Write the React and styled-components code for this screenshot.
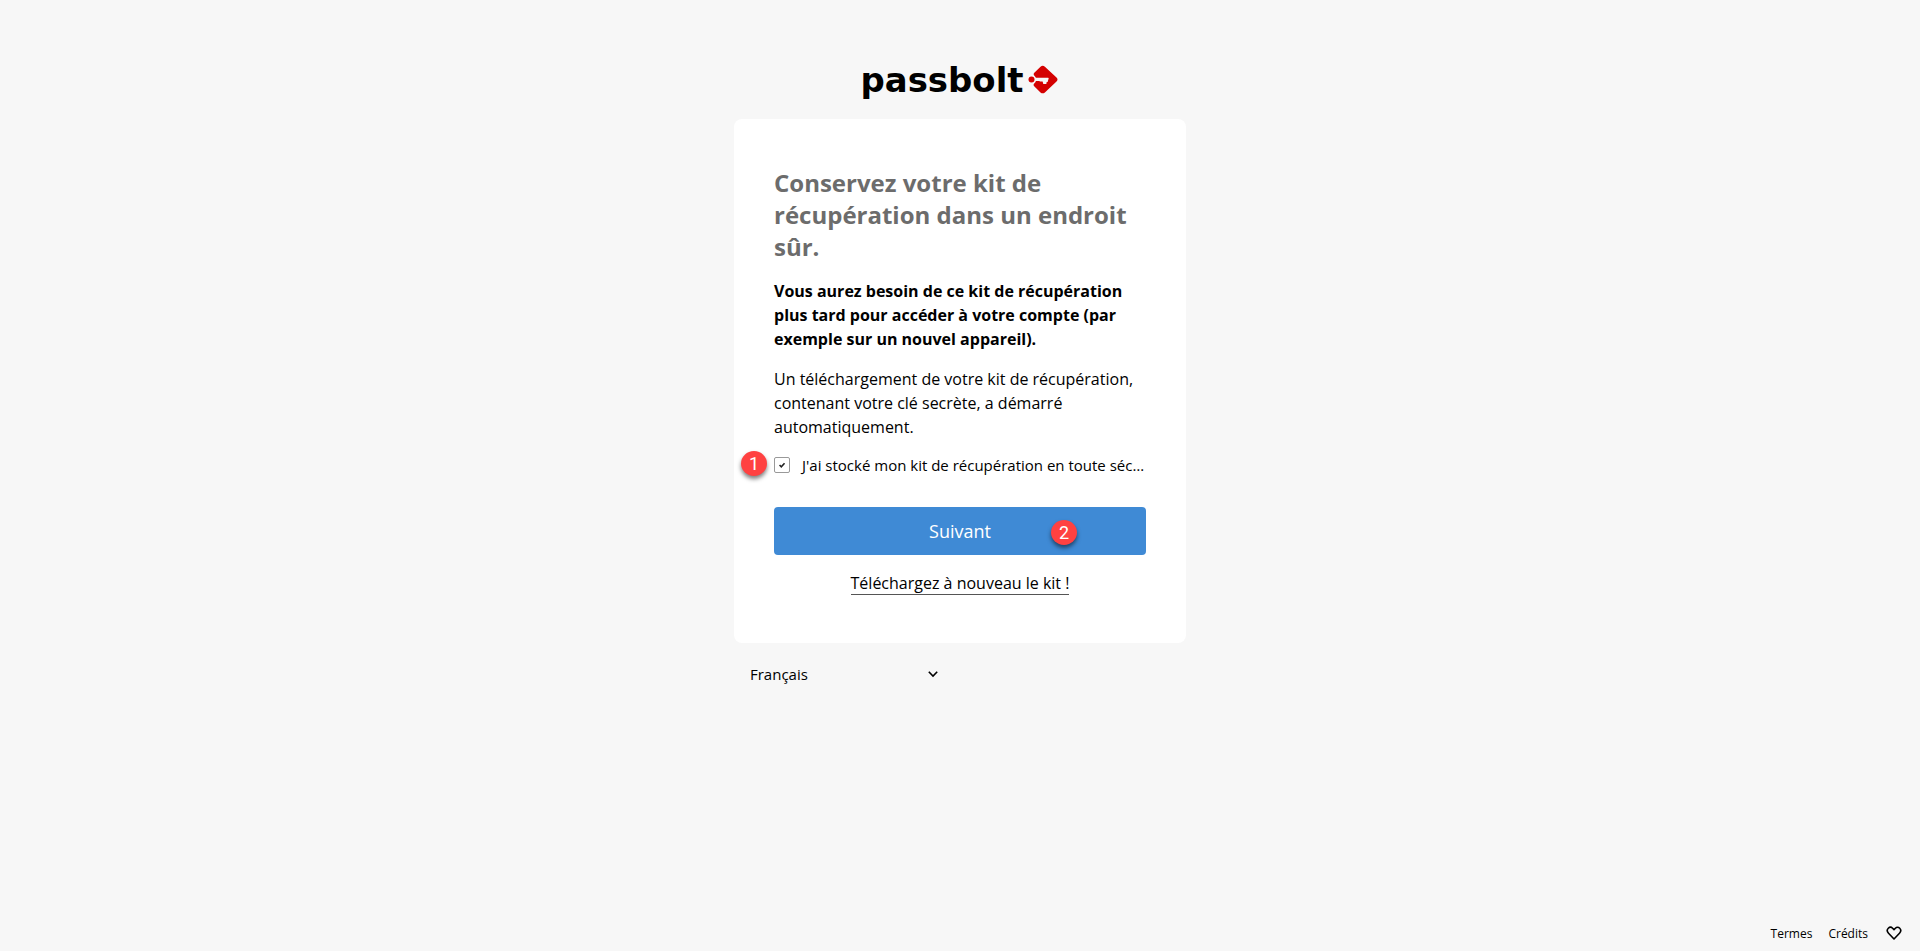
import React, { useState } from 'react';
import styled, { createGlobalStyle } from 'styled-components';

function App() {
  const [stored, setStored] = useState(true);

  return (
    <>
      <GlobalStyle />
      <Page>
        <Main>
          <Logo viewBox="0 0 200 40" role="img" aria-label="passbolt">
            <Wordmark x="0.5" y="31.6" textLength="163" lengthAdjust="spacingAndGlyphs">
              passbolt
            </Wordmark>
            <path
              d="M180.5 6.7q2.2-1.8 4.4 0l11.6 10.8q2 2 0 4l-11.6 10.9q-2.2 1.8-4.4 0l-6.3-6.1q-1.4-1.4-.2-2.6 2.2-1.8 2.2-4.2t-2.2-4.2q-1-1.2.3-2.5z"
              fill="#d40101"
            />
            <path d="M174 17.8h14q1 0 .6 1l-1 3.2h-.9l-.4 2h-3l-.7-2.4H180l-.7-.6H174z" fill="#f7f7f7" />
            <circle cx="171.5" cy="19.6" r="3" fill="#d40101" />
          </Logo>

          <Card>
            <Title>Conservez votre kit de récupération dans un endroit sûr.</Title>
            <Paragraph $strong>
              Vous aurez besoin de ce kit de récupération plus tard pour accéder à votre compte (par
              exemple sur un nouvel appareil).
            </Paragraph>
            <Paragraph>
              Un téléchargement de votre kit de récupération, contenant votre clé secrète, a démarré
              automatiquement.
            </Paragraph>

            <CheckboxRow>
              <Checkbox
                type="checkbox"
                checked={stored}
                onChange={(e) => setStored(e.target.checked)}
              />
              <CheckMark viewBox="0 0 16 16">
                {stored && <path d="M5.2 8l2 2 3.7-4" />}
              </CheckMark>
              <CheckboxLabel>J'ai stocké mon kit de récupération en toute séc…</CheckboxLabel>
              <Marker $left="-33px" $top="-4px">1</Marker>
            </CheckboxRow>

            <NextButton type="button" disabled={!stored}>
              Suivant
              <Marker $left="277px" $top="13px">2</Marker>
            </NextButton>
            <DownloadLink href="#">Téléchargez à nouveau le kit !</DownloadLink>
          </Card>

          <LocaleSelect type="button">
            Français
            <Chevron viewBox="0 0 12 8">
              <path d="M1.8 1.8L6 6l4.2-4.2" />
            </Chevron>
          </LocaleSelect>
        </Main>

        <Footer>
          <FooterLink href="#">Termes</FooterLink>
          <FooterLink href="#">Crédits</FooterLink>
          <Heart viewBox="0 0 16 14">
            <path d="M8 13L2.5 7.2C1 5.6 1.1 3.4 2.3 2.2s3.1-1.2 4.3 0L8 3.6l1.4-1.4c1.2-1.2 3.1-1.2 4.3 0s1.3 3.4-.2 5z" />
          </Heart>
        </Footer>
      </Page>
    </>
  );
}

// Styled Components
const GlobalStyle = createGlobalStyle`
  * {
    box-sizing: border-box;
  }

  body {
    margin: 0;
    background: #f7f7f7;
    color: #000;
    font-family: 'Open Sans', 'Noto Sans', sans-serif;
    font-size: 16px;
  }
`;

const Page = styled.div`
  display: flex;
  flex-direction: column;
  min-height: 100vh;
`;

const Main = styled.main`
  display: flex;
  flex-direction: column;
  flex: 1;
  width: 452px;
  margin: 0 auto;
  padding-top: 60px;
`;

const Logo = styled.svg`
  width: 200px;
  height: 40px;
  margin: 0 auto 19px;
  overflow: visible;
`;

const Wordmark = styled.text`
  font-family: 'DejaVu Sans', sans-serif;
  font-size: 34.5px;
  font-weight: 700;
`;

const Card = styled.section`
  display: flex;
  flex-direction: column;
  height: 524px;
  padding: 48px 40px 40px;
  background: #fff;
  border-radius: 8px;
`;

const Title = styled.h1`
  margin: 0 0 16px;
  color: #6c6c6c;
  font-size: 24px;
  font-weight: 700;
  line-height: 32px;
`;

const Paragraph = styled.p`
  margin: 0 0 16px;
  font-weight: ${({ $strong }) => ($strong ? 700 : 400)};
  line-height: 24px;
`;

const CheckboxRow = styled.label`
  position: relative;
  display: flex;
  align-items: center;
  height: 20px;
  margin-bottom: 32px;
  cursor: pointer;
`;

const Checkbox = styled.input`
  position: absolute;
  opacity: 0;
`;

const CheckMark = styled.svg`
  flex: none;
  width: 16px;
  height: 16px;
  margin-right: 12px;
  border: 1px solid #999;
  border-radius: 2px;
  fill: none;
  stroke: #222;
  stroke-width: 1.8;
`;

const CheckboxLabel = styled.span`
  font-size: 15px;
  line-height: 20px;
  white-space: nowrap;
`;

const Marker = styled.span`
  position: absolute;
  left: ${({ $left }) => $left};
  top: ${({ $top }) => $top};
  width: 26px;
  height: 25px;
  border-radius: 50%;
  background: #ff4141;
  box-shadow: 0 3px 4px rgba(0, 0, 0, 0.5);
  color: #fff;
  font-family: Roboto, sans-serif;
  font-size: 18px;
  line-height: 25px;
  text-align: center;
`;

const NextButton = styled.button`
  position: relative;
  flex: none;
  height: 48px;
  margin-bottom: 16px;
  border: 0;
  border-radius: 4px;
  background: #3f8ad5;
  color: #fff;
  font-family: inherit;
  font-size: 18px;
  cursor: pointer;
`;

const DownloadLink = styled.a`
  align-self: center;
  padding-top: 1px;
  border-bottom: 1px solid #555;
  color: #000;
  line-height: 22px;
  text-decoration: none;
`;

const LocaleSelect = styled.button`
  display: flex;
  align-items: center;
  justify-content: space-between;
  width: 221px;
  height: 32px;
  margin-top: 15px;
  padding: 0 16px;
  border: 0;
  background: none;
  color: #000;
  font-family: inherit;
  font-size: 15px;
`;

const Chevron = styled.svg`
  width: 12px;
  height: 8px;
  fill: none;
  stroke: #000;
  stroke-width: 1.6;
`;

const Footer = styled.footer`
  display: flex;
  align-items: center;
  justify-content: flex-end;
  gap: 16px;
  height: 36px;
  padding-right: 18px;
`;

const FooterLink = styled.a`
  color: #000;
  font-size: 12px;
  text-decoration: none;
`;

const Heart = styled.svg`
  width: 16px;
  height: 14px;
  margin-left: 2px;
  fill: none;
  stroke: #000;
  stroke-width: 1.6;
  stroke-linejoin: round;
`;

export default App;
